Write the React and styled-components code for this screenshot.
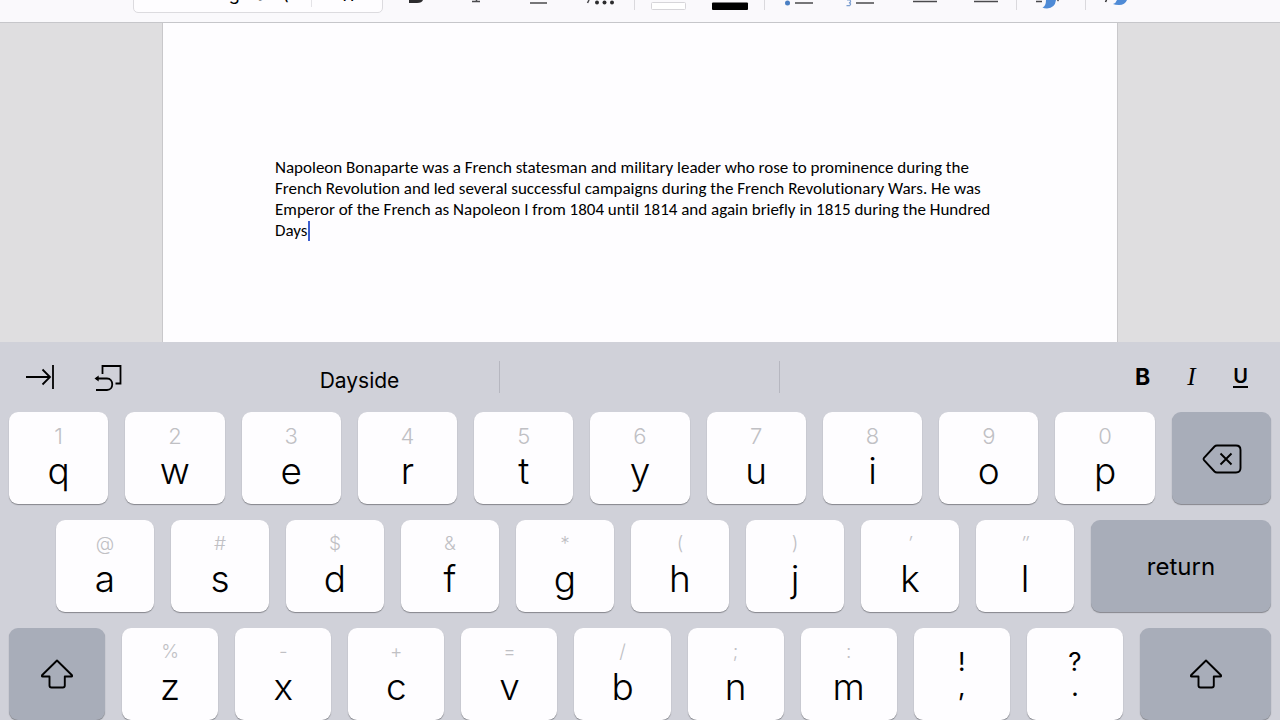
import React from 'react';
import styled, { createGlobalStyle } from 'styled-components';

const GlobalStyle = createGlobalStyle`
    * {
        box-sizing: border-box;
    }
    body {
        margin: 0;
        background-color: #d0d1d9;
        font-family: Inter, "Liberation Sans", sans-serif;
        color: #000000;
    }
    button, select {
        margin: 0;
        padding: 0;
        border: none;
        outline: none;
        background: none;
        font-family: inherit;
        color: inherit;
        cursor: pointer;
    }
`;

const Screen = styled.div`
    display: flex;
    flex-direction: column;
    height: 100vh;
    overflow: hidden;
`;

const Toolbar = styled.header`
    display: flex;
    align-items: flex-end;
    flex: 0 0 23px;
    padding: 0 133px;
    overflow: hidden;
    background-color: #faf9fc;
    border-bottom: 1px solid #c6c6ca;
`;

const FontBox = styled.div`
    display: flex;
    flex: 0 0 250px;
    height: 40px;
    margin: 0 3px 9px 0;
    border: 1px solid #dcdbdf;
    border-radius: 5px;
    background-color: #fefdff;
`;

const FontSelect = styled.select`
    appearance: none;
    flex: ${props => props.$grow} 1 0;
    min-width: 0;
    height: 38px;
    padding-left: 38px;
    font-size: 18px;
    text-align: center;
    text-align-last: center;
    & + & {
        height: 33px;
        padding: 8px 0 0;
        border-left: 1px solid #e4e3e7;
    }
`;

const ToolButton = styled.button`
    flex: 0 0 61px;
    height: 22px;
    svg {
        display: block;
    }
`;

const ToolDivider = styled.div`
    flex: 0 0 1px;
    height: 10px;
    margin: 0 3px 12px 4px;
    background-color: #dad9dd;
`;

const Desk = styled.main`
    flex: 1 1 0;
    min-height: 0;
    padding: 0 162px;
    overflow: hidden;
    background-color: #dfdee0;
`;

const Page = styled.article`
    min-height: 100%;
    padding: 134px 112px 0;
    border: solid #c9c8cb;
    border-width: 0 1px;
    background-color: #fefdff;
`;

const Paragraph = styled.p`
    margin: 0;
    font-family: Carlito, Lato, sans-serif;
    font-size: 17px;
    font-variant-ligatures: none;
    line-height: 21px;
`;

const Caret = styled.span`
    display: inline-block;
    width: 2px;
    height: 20px;
    margin-left: 1px;
    vertical-align: -5px;
    background-color: #3d5fd0;
`;

const Keyboard = styled.section`
    display: flex;
    flex-direction: column;
    flex: 0 0 378px;
    background-color: #d0d1d9;
`;

const AssistantBar = styled.div`
    display: grid;
    grid-template-columns: 220px 1fr 220px;
    flex: 0 0 70px;
`;

const Shortcuts = styled.div`
    display: flex;
    align-items: center;
    justify-content: ${props => props.$end ? 'flex-end' : 'flex-start'};
    padding: 0 15px;
`;

const Shortcut = styled.button`
    display: flex;
    align-items: center;
    justify-content: center;
    width: ${props => props.$wide ? 88 : 49}px;
    height: 44px;
`;

const Bold = styled.b`
    font-size: 23px;
    font-weight: 700;
`;

const Italic = styled.i`
    font-family: "Liberation Serif", serif;
    font-size: 25px;
`;

const Underline = styled.span`
    padding: 0;
    border-bottom: 2px solid #000000;
    font-size: 20px;
    font-weight: 600;
    line-height: 20px;
`;

const Suggestions = styled.div`
    display: grid;
    grid-template-columns: repeat(3, 1fr);
    align-items: center;
`;

const Suggestion = styled.button`
    height: 32px;
    padding-top: 6px;
    font-size: 21px;
    line-height: 28px;
    &:not(:last-child) {
        border-right: 1px solid #b6b7c0;
    }
`;

const Keys = styled.div`
    display: flex;
    flex-direction: column;
    gap: 16px;
`;

const KeyRow = styled.div`
    display: flex;
    gap: 17px;
    padding: 0 9px 0 ${props => props.$indent ? 56 : 9}px;
`;

const Key = styled.button`
    display: flex;
    flex-direction: column;
    align-items: center;
    flex: ${props => props.$grow || 1} 1 0;
    min-width: 0;
    height: 92px;
    padding-top: ${props => props.$stacked ? 21 : 10}px;
    border-radius: 9px;
    background-color: #fefdff;
    box-shadow: 0 1px 1px #85868c;
`;

const SystemKey = styled(Key)`
    justify-content: center;
    padding-top: 0;
    background-color: #a8adb9;
    font-size: 24px;
`;

const Hint = styled.span`
    color: #c0c0c4;
    font-size: ${props => props.$digit ? 22 : 19}px;
    font-style: ${props => props.$slanted ? 'italic' : 'normal'};
    font-weight: 300;
    line-height: 28px;
`;

const Letter = styled.span`
    font-size: 37px;
    font-weight: 300;
    line-height: 42px;
`;

const Marks = styled.span`
    font-size: 26px;
    line-height: 25px;
    white-space: pre-line;
`;

const topRow = [
    ['1', 'q'], ['2', 'w'], ['3', 'e'], ['4', 'r'], ['5', 't'],
    ['6', 'y'], ['7', 'u'], ['8', 'i'], ['9', 'o'], ['0', 'p'],
];

const homeRow = [
    ['@', 'a'], ['#', 's'], ['$', 'd'], ['&', 'f'], ['*', 'g'],
    ['(', 'h'], [')', 'j'], ['′', 'k'], ['″', 'l'],
];

const bottomRow = [
    ['%', 'z'], ['-', 'x'], ['+', 'c'], ['=', 'v'], ['/', 'b'], [';', 'n'], [':', 'm'],
];

const marks = ['!\n,', '?\n.'];

const ToolIcon = ({ children }) => (
    <svg width="61" height="22" viewBox="0 0 61 22" fill="none" stroke="#4a4a4d" strokeWidth="1.5">
        {children}
    </svg>
);

const TabIcon = () => (
    <svg width="30" height="26" viewBox="0 0 30 26" fill="none" stroke="#000" strokeWidth="1.8">
        <path d="M1 13h24M17.5 5.500l7.500 7.500-7.500 7.500M28 1v24" />
    </svg>
);

const UndoIcon = () => (
    <svg width="28" height="28" viewBox="0 0 28 28" fill="none" stroke="#000" strokeWidth="1.8">
        <path d="M8.500 11V3H26.500V20.500H21.500" />
        <path d="M2 15.500H13C20 15.500 20 27 13 27H2" />
        <path d="M0.500 15.500l4.200-3v6z" fill="#000" stroke="none" />
    </svg>
);

const DeleteIcon = () => (
    <svg width="42" height="32" viewBox="-2 -2 42 32" fill="none" stroke="#000" strokeWidth="1.9" strokeLinejoin="round">
        <path d="M15 1.500H34Q38.500 1.500 38.500 6V24Q38.500 28.500 34 28.500H15Q13.500 28.500 12.500 27.500L2 16.200Q1 15 2 13.800L12.500 2.500Q13.500 1.500 15 1.500Z" />
        <path d="M18.500 9.500l11 11M29.500 9.500l-11 11" />
    </svg>
);

const ShiftIcon = () => (
    <svg width="34" height="30" viewBox="0 0 34 30" fill="none" stroke="#000" strokeWidth="1.9" strokeLinejoin="round">
        <path d="M17 1.500L32 16.300Q32.500 17.500 31.500 17.500H24.800V26.500Q24.800 28.500 22.800 28.500H11.500Q9.500 28.500 9.500 26.500V17.500H2.500Q1.500 17.500 2 16.300Z" />
    </svg>
);

const LetterKeys = ({ keys, digit, grow }) => keys.map(([hint, letter]) => (
    <Key key={letter} type="button" $grow={grow}>
        <Hint $digit={digit} $slanted={hint === '′' || hint === '″'}>{hint}</Hint>
        <Letter>{letter}</Letter>
    </Key>
));

const FormatToolbar = () => (
    <Toolbar>
        <FontBox>
            <FontSelect $grow={140} aria-label="Font">
                <option>DengXian (</option>
            </FontSelect>
            <FontSelect $grow={70} aria-label="Font size">
                <option>11</option>
            </FontSelect>
        </FontBox>
        <ToolButton type="button" aria-label="Bold">
            <ToolIcon><path d="M23 0h14q-1 3-6 3h-8z" fill="#2c2c2e" stroke="none" /></ToolIcon>
        </ToolButton>
        <ToolButton type="button" aria-label="Italic">
            <ToolIcon><path d="M25 1.500h8M29.500 0v2" /></ToolIcon>
        </ToolButton>
        <ToolButton type="button" aria-label="Underline">
            <ToolIcon><path d="M22 3h17" /></ToolIcon>
        </ToolButton>
        <ToolButton type="button" aria-label="More formatting">
            <ToolIcon>
                <path d="M20 0l-1.500 3" />
                <g fill="#2c2c2e" stroke="none">
                    <circle cx="28" cy="2.500" r="2" />
                    <circle cx="35.500" cy="2.500" r="2" />
                    <circle cx="43" cy="2.500" r="2" />
                </g>
            </ToolIcon>
        </ToolButton>
        <ToolDivider />
        <ToolButton type="button" aria-label="Highlight">
            <ToolIcon><rect x="13.500" y="2.500" width="34" height="7" rx="1" fill="#fff" stroke="#d6d5d9" strokeWidth="1" /></ToolIcon>
        </ToolButton>
        <ToolButton type="button" aria-label="Font colour">
            <ToolIcon><rect x="13" y="2.500" width="36" height="7.500" rx="1" fill="#000" stroke="none" /></ToolIcon>
        </ToolButton>
        <ToolDivider />
        <ToolButton type="button" aria-label="Bullets">
            <ToolIcon>
                <circle cx="19.500" cy="3" r="2.500" fill="#4a80c4" stroke="none" />
                <path d="M27 3h18" />
            </ToolIcon>
        </ToolButton>
        <ToolButton type="button" aria-label="Numbering">
            <ToolIcon>
                <path d="M18 0h3q1.500 2.500-1 2.700q3 1 0.500 3h-3" stroke="#7d9fd0" strokeWidth="1.200" />
                <path d="M27 3h18" />
            </ToolIcon>
        </ToolButton>
        <ToolButton type="button" aria-label="Align">
            <ToolIcon><path d="M23 1.500h24" /></ToolIcon>
        </ToolButton>
        <ToolButton type="button" aria-label="Indent">
            <ToolIcon><path d="M23 1.500h24" /></ToolIcon>
        </ToolButton>
        <ToolDivider />
        <ToolButton type="button" aria-label="Styles">
            <ToolIcon>
                <path d="M16 1.500h6M37.500 1l1-1" />
                <path d="M26 0H36Q35 8 27 8.500Q24 8.500 22.500 7.500Q26 6 26 0Z" fill="#4f8bd6" stroke="none" />
            </ToolIcon>
        </ToolButton>
        <ToolDivider />
        <ToolButton type="button" aria-label="Format painter">
            <ToolIcon>
                <path d="M17.500 0l-1 2" stroke="#2c2c2e" />
                <path d="M28 0H38Q36 5 30 5Q26 5 24 4Q27 3 28 0Z" fill="#4f8bd6" stroke="none" />
            </ToolIcon>
        </ToolButton>
    </Toolbar>
);

const App = () => (
    <Screen>
        <GlobalStyle />
        <FormatToolbar />
        <Desk>
            <Page>
                <Paragraph>
                    Napoleon Bonaparte was a French statesman and military leader who rose to prominence during the
                    French Revolution and led several successful campaigns during the French Revolutionary Wars. He was
                    Emperor of the French as Napoleon I from 1804 until 1814 and again briefly in 1815 during the Hundred
                    Days<Caret />
                </Paragraph>
            </Page>
        </Desk>
        <Keyboard>
            <AssistantBar>
                <Shortcuts>
                    <Shortcut type="button" aria-label="Tab"><TabIcon /></Shortcut>
                    <Shortcut type="button" $wide aria-label="Undo"><UndoIcon /></Shortcut>
                </Shortcuts>
                <Suggestions>
                    <Suggestion type="button">Dayside</Suggestion>
                    <Suggestion type="button" aria-label="Second suggestion" />
                    <Suggestion type="button" aria-label="Third suggestion" />
                </Suggestions>
                <Shortcuts $end>
                    <Shortcut type="button"><Bold>B</Bold></Shortcut>
                    <Shortcut type="button"><Italic>I</Italic></Shortcut>
                    <Shortcut type="button"><Underline>U</Underline></Shortcut>
                </Shortcuts>
            </AssistantBar>
            <Keys>
                <KeyRow>
                    <LetterKeys keys={topRow} digit />
                    <SystemKey type="button" aria-label="Delete"><DeleteIcon /></SystemKey>
                </KeyRow>
                <KeyRow $indent>
                    <LetterKeys keys={homeRow} grow={98} />
                    <SystemKey type="button" $grow={180}>return</SystemKey>
                </KeyRow>
                <KeyRow>
                    <SystemKey type="button" $grow={96} aria-label="Shift"><ShiftIcon /></SystemKey>
                    <LetterKeys keys={bottomRow} grow={96} />
                    {marks.map(pair => (
                        <Key key={pair} type="button" $grow={96} $stacked>
                            <Marks>{pair}</Marks>
                        </Key>
                    ))}
                    <SystemKey type="button" $grow={131} aria-label="Right shift"><ShiftIcon /></SystemKey>
                </KeyRow>
            </Keys>
        </Keyboard>
    </Screen>
);

export default App;
